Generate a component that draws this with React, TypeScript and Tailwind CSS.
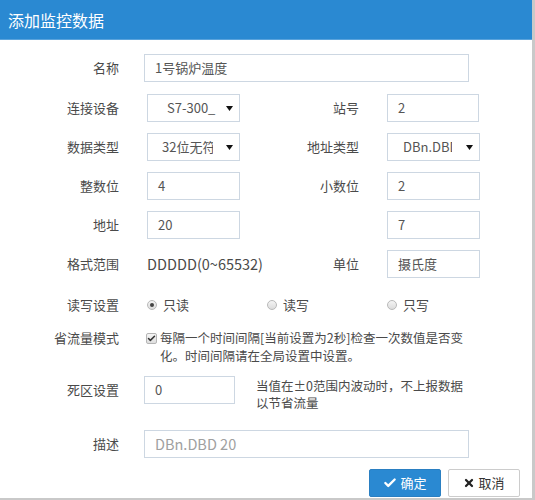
import { Check, X } from 'lucide-react';

const font = { fontFamily: '"Noto Sans CJK SC", "Noto Sans", sans-serif' };

function Label({ children, w = 'w-[119px]' }: { children: React.ReactNode; w?: string }) {
  return <div className={`${w} shrink-0 text-right text-[13px] text-[#4a4a4a]`}>{children}</div>;
}

function Field({ value, w, muted }: { value: string; w: string; muted?: boolean }) {
  return (
    <div
      className={`${w} shrink-0 h-[28px] border border-[#cdd7e2] bg-white flex items-center pl-[10px] ${
        muted ? 'text-[14.5px] text-[#a0a0a0]' : 'text-[13px] text-[#555]'
      }`}
    >
      {value}
    </div>
  );
}

// 下拉框：文字超出宽度时被截断，右侧是小三角
function Select({ value, clip, pl = 'pl-[14px]' }: { value: string; clip: string; pl?: string }) {
  return (
    <div className={`w-[93px] shrink-0 h-[28px] border border-[#cdd7e2] bg-white flex items-center ${pl} pr-[6px] text-[13px] text-[#555]`}>
      <span className={`${clip} shrink-0 overflow-hidden whitespace-nowrap`}>{value}</span>
      <svg className="ml-auto" width="7" height="5" viewBox="0 0 7 5">
        <path d="M0 0h7L3.5 5z" fill="#111" />
      </svg>
    </div>
  );
}

function Radio({ checked, label }: { checked?: boolean; label: string }) {
  return (
    <div className="flex items-center gap-[6px] text-[13px] text-[#4a4a4a]">
      <span className="w-[10px] h-[10px] rounded-full border border-[#b9b9b9] bg-gradient-to-b from-[#f4f4f4] to-[#dcdcdc] flex items-center justify-center">
        {checked && <span className="w-[4px] h-[4px] rounded-full bg-[#444]" />}
      </span>
      {label}
    </div>
  );
}

export default function App() {
  return (
    <div className="w-[535px] h-[500px] bg-[#c9c9c9]" style={font}>
      <div className="w-[532px] h-[498px] bg-white flex flex-col">
        {/* 标题栏 */}
        <div className="h-[40px] bg-[#2a89d2] border-b border-[#5aa3dc] flex items-center pl-[8px] text-[16px] text-white shrink-0">
          添加监控数据
        </div>

        <div className="flex items-center h-[28px] mt-[14px]">
          <Label>名称</Label>
          <div className="ml-[25px]">
            <Field value="1号锅炉温度" w="w-[325px]" />
          </div>
        </div>

        <div className="flex items-center h-[28px] mt-[12px]">
          <Label>连接设备</Label>
          <div className="ml-[28px]">
            <Select value="S7-300_PLC" clip="w-[49px]" pl="pl-[19px]" />
          </div>
          <Label>站号</Label>
          <div className="ml-[28px]">
            <Field value="2" w="w-[92px]" />
          </div>
        </div>

        <div className="flex items-center h-[28px] mt-[11px]">
          <Label>数据类型</Label>
          <div className="ml-[28px]">
            <Select value="32位无符号" clip="w-[51px]" />
          </div>
          <Label>地址类型</Label>
          <div className="ml-[28px]">
            <Select value="DBn.DBD" clip="w-[49px]" pl="pl-[15px]" />
          </div>
        </div>

        <div className="flex items-center h-[28px] mt-[11px]">
          <Label>整数位</Label>
          <div className="ml-[28px]">
            <Field value="4" w="w-[93px]" />
          </div>
          <Label>小数位</Label>
          <div className="ml-[28px]">
            <Field value="2" w="w-[93px]" />
          </div>
        </div>

        <div className="flex items-center h-[28px] mt-[11px]">
          <Label>地址</Label>
          <div className="ml-[28px]">
            <Field value="20" w="w-[93px]" />
          </div>
          <div className="w-[119px] shrink-0" />
          <div className="ml-[28px]">
            <Field value="7" w="w-[93px]" />
          </div>
        </div>

        <div className="flex items-center h-[28px] mt-[11px]">
          <Label>格式范围</Label>
          <div className="ml-[28px] w-[93px] shrink-0 whitespace-nowrap text-[14.5px] text-[#4a4a4a]">DDDDD(0~65532)</div>
          <Label>单位</Label>
          <div className="ml-[28px]">
            <Field value="摄氏度" w="w-[93px]" />
          </div>
        </div>

        <div className="flex items-center h-[20px] mt-[17px]">
          <Label>读写设置</Label>
          <div className="ml-[28px] w-[120px] shrink-0">
            <Radio checked label="只读" />
          </div>
          <div className="w-[120px] shrink-0">
            <Radio label="读写" />
          </div>
          <Radio label="只写" />
        </div>

        <div className="flex items-start mt-[14px]">
          <Label>
            <span className="leading-[18px] block">省流量模式</span>
          </Label>
          <div className="ml-[27px] flex items-start gap-[3px]">
            <span className="mt-[4px] shrink-0 w-[11px] h-[11px] rounded-[2px] border border-[#b5b5b5] bg-gradient-to-b from-[#f6f6f6] to-[#dedede] flex items-center justify-center">
              <Check className="w-[9px] h-[9px] text-[#333]" strokeWidth={4} />
            </span>
            <div className="text-[12.5px] leading-[18px] text-[#4a4a4a] whitespace-nowrap">
              每隔一个时间间隔[当前设置为2秒]检查一次数值是否变
              <br />
              化。时间间隔请在全局设置中设置。
            </div>
          </div>
        </div>

        <div className="flex items-start mt-[11px]">
          <Label>
            <span className="leading-[28px] block">死区设置</span>
          </Label>
          <div className="ml-[25px] shrink-0">
            <Field value="0" w="w-[91px]" />
          </div>
          <div className="ml-[21px] mt-[1px] text-[12.5px] leading-[17px] text-[#4a4a4a] whitespace-nowrap">
            当值在±0范围内波动时，不上报数据
            <br />
            以节省流量
          </div>
        </div>

        <div className="flex items-center h-[28px] mt-[19px]">
          <Label>描述</Label>
          <div className="ml-[25px]">
            <Field value="DBn.DBD 20" w="w-[325px]" muted />
          </div>
        </div>

        <div className="flex justify-end gap-[7px] pr-[12px] mt-[11px]">
          <button className="w-[72px] h-[28px] bg-[#2a89d2] border border-[#2a7fc2] rounded-[2px] flex items-center justify-center gap-[3px] text-[13px] text-white">
            <Check className="w-[14px] h-[14px]" strokeWidth={4} />
            确定
          </button>
          <button className="w-[72px] h-[28px] bg-white border border-[#cccccc] rounded-[2px] flex items-center justify-center gap-[3px] text-[13px] text-[#333]">
            <X className="w-[12px] h-[12px] text-[#222]" strokeWidth={4.5} />
            取消
          </button>
        </div>
      </div>
    </div>
  );
}
